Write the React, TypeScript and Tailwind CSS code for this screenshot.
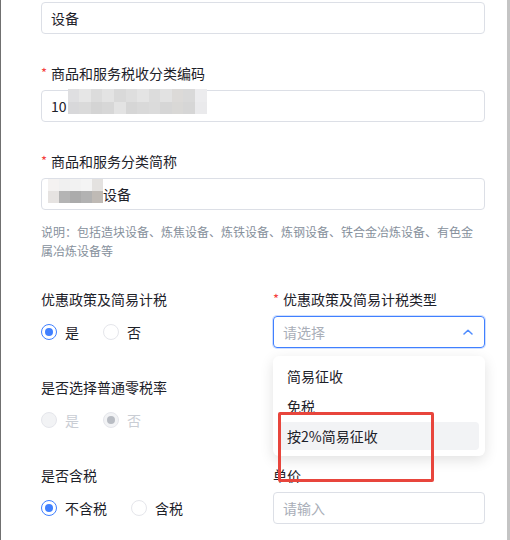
import React from 'react';

const font = { fontFamily: '"Noto Sans CJK SC", "Noto Sans", sans-serif' };

function Label({ text, required }: { text: string; required?: boolean }) {
  return (
    <div className="h-[22px] leading-[22px] text-[14px] text-[#1d2129] flex items-center mb-[6px]">
      {required && <span className="text-[#f53f3f] mr-[4px] text-[13px]">*</span>}
      <span>{text}</span>
    </div>
  );
}

function Mosaic({ cols, rows, cw, ch, colors }: { cols: number; rows: number; cw: number; ch: number; colors: string[] }) {
  const cells = [];
  for (let r = 0; r < rows; r++) {
    for (let c = 0; c < cols; c++) {
      cells.push(<div key={r + '-' + c} style={{ width: cw, height: ch, background: colors[(r * cols + c) % colors.length] }} />);
    }
  }
  return (
    <div className="grid shrink-0" style={{ gridTemplateColumns: `repeat(${cols}, ${cw}px)` }}>
      {cells}
    </div>
  );
}

function Radio({ label, checked, disabled }: { label: string; checked?: boolean; disabled?: boolean }) {
  let ring = 'border-[#e5e6eb] bg-white';
  if (checked && !disabled) ring = 'border-[#4080ff] border-[1.5px] bg-white';
  if (disabled) ring = 'border-[#e5e6eb] bg-[#f2f3f5]';
  return (
    <label className="flex items-center mr-[24px]">
      <span className={`w-4 h-4 rounded-full border flex items-center justify-center ${ring}`}>
        {checked && <span className={`w-[8px] h-[8px] rounded-full ${disabled ? 'bg-[#b8bcc3]' : 'bg-[#4080ff]'}`} />}
      </span>
      <span className={`ml-[8px] text-[14px] ${disabled ? 'text-[#c9cdd4]' : 'text-[#1d2129]'}`}>{label}</span>
    </label>
  );
}

const options = ['简易征收', '免税', '按2%简易征收'];

export default function App() {
  return (
    <div className="flex h-[540px] w-[510px] overflow-hidden bg-white" style={font}>
      <div className="w-px bg-[#707070]" />
      <div className="relative flex-1 pl-[40px] pt-[2px]">
        <div className="w-[444px]">
          <div className="h-8 rounded-[4px] border border-[#dcdfe6] flex items-center pl-[9px] text-[14px] text-[#1d2129] mb-[28px]">
            设备
          </div>

          <div className="mb-[28px]">
            <Label text="商品和服务税收分类编码" required />
            <div className="h-8 rounded-[4px] border border-[#dcdfe6] flex items-center pl-[9px] text-[14px] text-[#1d2129]">
              <span>10</span>
              <div className="self-start -mt-[2px] ml-[1px]">
                <Mosaic
                  cols={12}
                  rows={2}
                  cw={11.6}
                  ch={12.5}
                  colors={[
                    '#dfdfe1', '#e6e6e6', '#dcdcdc', '#e3e3e3', '#d9d9d9', '#dedede', '#e4e4e4', '#dcdcdc', '#e2e2e2', '#dcdad8', '#d9d9d9', '#ececee',
                    '#d8d8da', '#dadada', '#d4d4d4', '#d7d7d7', '#e3e3e3', '#d6d6d6', '#d9d9d9', '#dbdbdb', '#d6d6d6', '#d9d8d6', '#d6d6d6', '#eaeaec',
                  ]}
                />
              </div>
            </div>
          </div>

          <div className="mb-[28px]">
            <Label text="商品和服务分类简称" required />
            <div className="h-8 rounded-[4px] border border-[#dcdfe6] flex items-center pl-[6px] text-[14px] text-[#1d2129]">
              <div className="self-start">
                <Mosaic
                  cols={5}
                  rows={2}
                  cw={11}
                  ch={12}
                  colors={['#f4f2f1', '#f0f0f0', '#f2f2f2', '#f4f4f4', '#e4e2e0', '#e6e3e1', '#b4b4b4', '#ababab', '#b2b2b2', '#bfbab5']}
                />
              </div>
              <span className="text-[#1d2129]">设备</span>
            </div>
            <div className="mt-[12px] pr-[2px] text-[12px] leading-[19px] text-[#86909c]">
              说明：包括造块设备、炼焦设备、炼铁设备、炼钢设备、铁合金冶炼设备、有色金属冶炼设备等
            </div>
          </div>

          <div className="grid grid-cols-2 gap-x-5">
            <div className="mb-[28px]">
              <Label text="优惠政策及简易计税" />
              <div className="h-8 flex items-center">
                <Radio label="是" checked />
                <Radio label="否" />
              </div>
            </div>
            <div className="mb-[28px] relative z-10">
              <Label text="优惠政策及简易计税类型" required />
              <div className="relative">
                <div className="h-8 rounded-[4px] border border-[#4080ff] shadow-[0_0_0_1px_rgba(64,128,255,0.25)] flex items-center justify-between pl-[9px] pr-[11px] text-[14px] text-[#a9aeb8]">
                  <span>请选择</span>
                  <svg width="10" height="6" viewBox="0 0 10 6" fill="none">
                    <path d="M1 5L5 1.2L9 5" stroke="#4f8cff" strokeWidth="1.5" strokeLinecap="round" strokeLinejoin="round" />
                  </svg>
                </div>
                <div className="absolute left-0 right-0 top-[40px] bg-white rounded-[6px] shadow-[0_4px_14px_rgba(0,0,0,0.12)] p-[6px] flex flex-col gap-[2px]">
                  {options.map((o, i) => (
                    <div
                      key={o}
                      className={`h-[28px] leading-[28px] px-[8px] rounded-[4px] text-[14px] text-[#1d2129] ${i === 2 ? 'bg-[#f2f3f5]' : ''}`}
                    >
                      {o}
                    </div>
                  ))}
                </div>
              </div>
            </div>

            <div className="mb-[28px]">
              <Label text="是否选择普通零税率" />
              <div className="h-8 flex items-center">
                <Radio label="是" disabled />
                <Radio label="否" checked disabled />
              </div>
            </div>
            <div className="mb-[28px]" />

            <div>
              <Label text="是否含税" />
              <div className="h-8 flex items-center">
                <Radio label="不含税" checked />
                <Radio label="含税" />
              </div>
            </div>
            <div>
              <Label text="单价" />
              <div className="h-8 rounded-[4px] border border-[#dcdfe6] flex items-center pl-[9px] text-[14px] text-[#a9aeb8]">
                请输入
              </div>
            </div>
          </div>
        </div>

        <div className="absolute left-[277px] top-[412px] w-[156px] h-[70px] border-[3px] border-[#e8453c] rounded-[2px] z-20" />
      </div>
      <div className="w-[3px] bg-[#c4c4c4]" />
    </div>
  );
}
